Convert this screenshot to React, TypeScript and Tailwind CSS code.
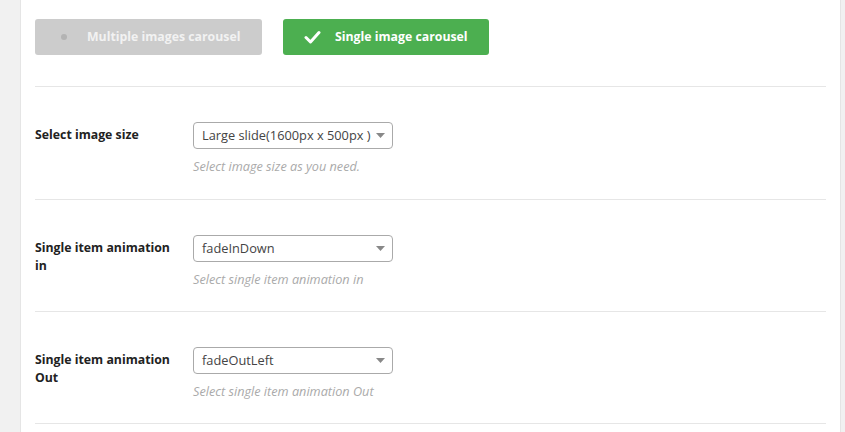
import React from 'react';

const FONT = { fontFamily: '"Open Sans", "Liberation Sans", sans-serif' };

interface RowProps {
  label: string;
  value: string;
  help: string;
  first?: boolean;
}

function SelectRow({ label, value, help, first }: RowProps) {
  return (
    <div className={`border-t border-[#e6e6e6] pt-[35px] flex ${first ? 'pb-[24px]' : 'pb-[23px]'}`}>
      <div className="w-[158px] pt-[4px] pr-[14px] text-[12.3px] leading-[18px] font-bold text-[#222]">
        {label}
      </div>
      <div className="flex flex-col">
        <div className="w-[200px] h-[27px] border border-[#aaaaaa] rounded-[4px] bg-white flex items-center justify-between pl-[8px] pr-[7px]">
          <span className="text-[12.8px] text-[#444]">{value}</span>
          <svg width="9" height="5" viewBox="0 0 9 5">
            <polygon points="0,0 9,0 4.5,5" fill="#888" />
          </svg>
        </div>
        <div className="mt-[8px] text-[12.7px] leading-[18px] italic text-[#aaaaaa]">{help}</div>
      </div>
    </div>
  );
}

export default function App() {
  return (
    <div className="w-[845px] h-[432px] bg-[#f1f1f1] overflow-hidden" style={FONT}>
      <div className="ml-[20px] w-[821px] h-full bg-white border-l border-r border-[#e5e5e5] pl-[14px] pr-[14px]">
        {/* Carousel type */}
        <div className="pt-[19px] pb-[31px] flex gap-[21px]">
          <button className="w-[227px] h-[36px] rounded-[3px] bg-[#cccccc] flex items-center text-[12.3px] font-bold text-[#f2f2f2]">
            <span className="ml-[26px] w-[6px] h-[6px] rounded-full bg-[#b3b3b3]" />
            <span className="ml-[20px]">Multiple images carousel</span>
          </button>
          <button className="w-[206px] h-[36px] rounded-[3px] bg-[#4caf50] flex items-center text-[12.3px] font-bold text-white">
            <svg className="ml-[21px]" width="17" height="14" viewBox="0 0 17 14">
              <polyline points="2,7.5 6.5,12 15,2.5" fill="none" stroke="#fff" strokeWidth="3" strokeLinecap="round" strokeLinejoin="round" />
            </svg>
            <span className="ml-[14px]">Single image carousel</span>
          </button>
        </div>

        <SelectRow
          first
          label="Select image size"
          value="Large slide(1600px x 500px )"
          help="Select image size as you need."
        />
        <SelectRow
          label="Single item animation in"
          value="fadeInDown"
          help="Select single item animation in"
        />
        <SelectRow
          label="Single item animation Out"
          value="fadeOutLeft"
          help="Select single item animation Out"
        />
        <div className="border-t border-[#e6e6e6]" />
      </div>
    </div>
  );
}
